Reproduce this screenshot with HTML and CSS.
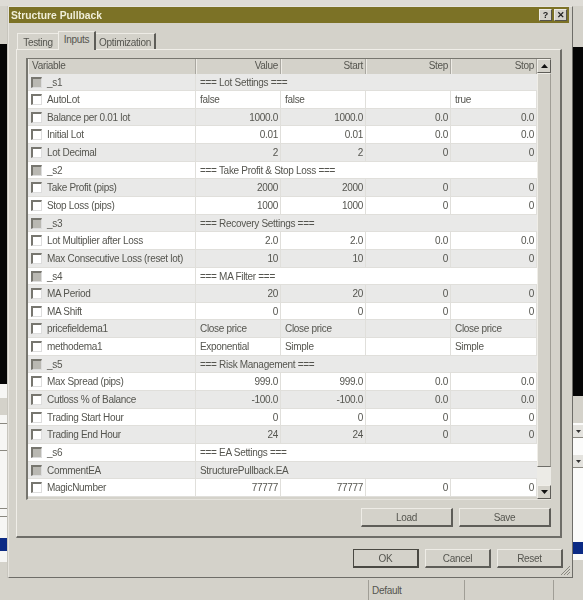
FILE: index.html
```html
<!DOCTYPE html>
<html lang="en">
<head>
    <meta charset="UTF-8">
    <title>Structure Pullback</title>
    <link rel="stylesheet" href="styles.css">
</head>
<body>
    <div class="desktop">
        <div class="top-strip"></div>
        <div class="side left-chart"></div>
        <div class="side left-panel">
            <div class="left-grey"></div>
            <div class="left-line"></div>
            <div class="left-line"></div>
            <div class="left-line left-line-low"></div>
            <div class="left-line left-line-tight"></div>
            <div class="left-blue"></div>
        </div>
        <div class="side right-chart"></div>
        <div class="side right-panel">
            <div class="right-grey"></div>
            <div class="right-drop"><svg width="5" height="3" viewBox="0 0 5 3"><path d="M0 0H5L2.5 3z" fill="#333"/></svg></div>
            <div class="right-drop right-drop-low"><svg width="5" height="3" viewBox="0 0 5 3"><path d="M0 0H5L2.5 3z" fill="#333"/></svg></div>
            <div class="right-blue"></div>
        </div>

        <div class="statusbar">
            <div class="status-cell status-wide"></div>
            <div class="status-cell status-default">Default</div>
            <div class="status-cell status-mid"></div>
            <div class="status-cell"></div>
        </div>

        <div class="dialog">
            <div class="titlebar">
                <span class="title">Structure Pullback</span>
                <span class="title-btn">?</span>
                <span class="title-btn">&#10005;</span>
            </div>

            <div class="tabs">
                <div class="tab tab-testing">Testing</div>
                <div class="tab tab-active">Inputs</div>
                <div class="tab tab-opt">Optimization</div>
            </div>

            <div class="page">
                <div class="grid-frame">
                    <div class="grid">
                        <div class="row head">
                            <div class="cell">Variable</div>
                            <div class="cell num">Value</div>
                            <div class="cell num">Start</div>
                            <div class="cell num">Step</div>
                            <div class="cell num">Stop</div>
                        </div>

                        <div class="row section"><div class="cell var"><i class="check off"></i>_s1</div><div class="cell span">=== Lot Settings ===</div></div>
                        <div class="row"><div class="cell var"><i class="check"></i>AutoLot</div><div class="cell">false</div><div class="cell">false</div><div class="cell"></div><div class="cell">true</div></div>
                        <div class="row"><div class="cell var"><i class="check"></i>Balance per 0.01 lot</div><div class="cell num">1000.0</div><div class="cell num">1000.0</div><div class="cell num">0.0</div><div class="cell num">0.0</div></div>
                        <div class="row"><div class="cell var"><i class="check"></i>Initial Lot</div><div class="cell num">0.01</div><div class="cell num">0.01</div><div class="cell num">0.0</div><div class="cell num">0.0</div></div>
                        <div class="row"><div class="cell var"><i class="check"></i>Lot Decimal</div><div class="cell num">2</div><div class="cell num">2</div><div class="cell num">0</div><div class="cell num">0</div></div>

                        <div class="row section"><div class="cell var"><i class="check off"></i>_s2</div><div class="cell span">=== Take Profit &amp; Stop Loss ===</div></div>
                        <div class="row"><div class="cell var"><i class="check"></i>Take Profit (pips)</div><div class="cell num">2000</div><div class="cell num">2000</div><div class="cell num">0</div><div class="cell num">0</div></div>
                        <div class="row"><div class="cell var"><i class="check"></i>Stop Loss (pips)</div><div class="cell num">1000</div><div class="cell num">1000</div><div class="cell num">0</div><div class="cell num">0</div></div>

                        <div class="row section"><div class="cell var"><i class="check off"></i>_s3</div><div class="cell span">=== Recovery Settings ===</div></div>
                        <div class="row"><div class="cell var"><i class="check"></i>Lot Multiplier after Loss</div><div class="cell num">2.0</div><div class="cell num">2.0</div><div class="cell num">0.0</div><div class="cell num">0.0</div></div>
                        <div class="row"><div class="cell var"><i class="check"></i>Max Consecutive Loss (reset lot)</div><div class="cell num">10</div><div class="cell num">10</div><div class="cell num">0</div><div class="cell num">0</div></div>

                        <div class="row section"><div class="cell var"><i class="check off"></i>_s4</div><div class="cell span">=== MA Filter ===</div></div>
                        <div class="row"><div class="cell var"><i class="check"></i>MA Period</div><div class="cell num">20</div><div class="cell num">20</div><div class="cell num">0</div><div class="cell num">0</div></div>
                        <div class="row"><div class="cell var"><i class="check"></i>MA Shift</div><div class="cell num">0</div><div class="cell num">0</div><div class="cell num">0</div><div class="cell num">0</div></div>
                        <div class="row"><div class="cell var"><i class="check"></i>pricefieldema1</div><div class="cell">Close price</div><div class="cell">Close price</div><div class="cell"></div><div class="cell">Close price</div></div>
                        <div class="row"><div class="cell var"><i class="check"></i>methodema1</div><div class="cell">Exponential</div><div class="cell">Simple</div><div class="cell"></div><div class="cell">Simple</div></div>

                        <div class="row section"><div class="cell var"><i class="check off"></i>_s5</div><div class="cell span">=== Risk Management ===</div></div>
                        <div class="row"><div class="cell var"><i class="check"></i>Max Spread (pips)</div><div class="cell num">999.0</div><div class="cell num">999.0</div><div class="cell num">0.0</div><div class="cell num">0.0</div></div>
                        <div class="row"><div class="cell var"><i class="check"></i>Cutloss % of Balance</div><div class="cell num">-100.0</div><div class="cell num">-100.0</div><div class="cell num">0.0</div><div class="cell num">0.0</div></div>
                        <div class="row"><div class="cell var"><i class="check"></i>Trading Start Hour</div><div class="cell num">0</div><div class="cell num">0</div><div class="cell num">0</div><div class="cell num">0</div></div>
                        <div class="row"><div class="cell var"><i class="check"></i>Trading End Hour</div><div class="cell num">24</div><div class="cell num">24</div><div class="cell num">0</div><div class="cell num">0</div></div>

                        <div class="row section"><div class="cell var"><i class="check off"></i>_s6</div><div class="cell span">=== EA Settings ===</div></div>
                        <div class="row section"><div class="cell var"><i class="check off"></i>CommentEA</div><div class="cell span">StructurePullback.EA</div></div>
                        <div class="row"><div class="cell var"><i class="check"></i>MagicNumber</div><div class="cell num">77777</div><div class="cell num">77777</div><div class="cell num">0</div><div class="cell num">0</div></div>
                    </div>

                    <div class="scrollbar">
                        <div class="scroll-btn"><svg width="7" height="4" viewBox="0 0 7 4"><path d="M3.5 0L7 4H0z" fill="#111"/></svg></div>
                        <div class="scroll-thumb"></div>
                        <div class="scroll-track"></div>
                        <div class="scroll-btn"><svg width="7" height="4" viewBox="0 0 7 4"><path d="M0 0H7L3.5 4z" fill="#111"/></svg></div>
                    </div>
                </div>

                <div class="page-buttons">
                    <button class="btn btn-wide">Load</button>
                    <button class="btn btn-wide">Save</button>
                </div>
            </div>

            <div class="footer">
                <button class="btn btn-default">OK</button>
                <button class="btn">Cancel</button>
                <button class="btn">Reset</button>
            </div>

            <svg class="grip" width="11" height="11" viewBox="0 0 11 11">
                <path d="M10 1L1 10M10 4L4 10M10 7L7 10" stroke="#8a8880" stroke-width="1" fill="none"/>
            </svg>
        </div>
    </div>
</body>
</html>
```

FILE: styles.css
```css
body {
    margin: 0;
    background: #d4d2ca;
    font-family: "Liberation Sans", Arial, sans-serif;
    font-size: 10px;
    letter-spacing: -0.3px;
    color: #55554f;
}
.desktop {
    position: relative;
    width: 583px;
    height: 600px;
    overflow: hidden;
    filter: blur(0.45px);
}

/* windows behind the dialog */
.top-strip {
    position: absolute;
    left: 0;
    top: 0;
    width: 583px;
    height: 6px;
    background: #dedcd6;
}
.side {
    position: absolute;
}
.left-chart {
    left: 0;
    top: 44px;
    width: 7px;
    height: 340px;
    background: #050505;
}
.left-panel {
    left: 0;
    top: 384px;
    width: 7px;
    height: 178px;
    background: #f6f6f4;
}
.left-grey {
    height: 17px;
    margin-top: 14px;
    background: #d4d2ca;
}
.left-line {
    height: 1px;
    margin-top: 8px;
    background: #8a8880;
}
.left-line + .left-line {
    margin-top: 26px;
}
.left-line-low.left-line {
    margin-top: 57px;
}
.left-line-tight.left-line {
    margin-top: 7px;
}
.left-blue {
    height: 13px;
    margin-top: 21px;
    background: #0b2a84;
}
.right-chart {
    left: 573px;
    top: 47px;
    width: 10px;
    height: 349px;
    background: #050505;
}
.right-panel {
    left: 573px;
    top: 396px;
    width: 10px;
    height: 164px;
    background: #fbfbfa;
}
.right-grey {
    height: 27px;
    background: #d4d2ca;
}
.right-drop {
    display: flex;
    align-items: center;
    justify-content: center;
    height: 12px;
    margin-top: 2px;
    background: #e4e3de;
    border-bottom: 1px solid #8a8880;
}
.right-drop-low {
    margin-top: 17px;
}
.right-blue {
    height: 12px;
    margin-top: 74px;
    background: #0b2a84;
}
.statusbar {
    position: absolute;
    left: 0;
    top: 580px;
    width: 583px;
    height: 20px;
    display: flex;
    background: #d4d2ca;
}
.status-cell {
    flex: 1;
    line-height: 21px;
    padding-left: 3px;
}
.status-wide {
    flex: none;
    width: 365px;
    border-right: 1px solid #a09e96;
}
.status-default {
    flex: none;
    width: 92px;
    border-right: 1px solid #a09e96;
}
.status-mid {
    flex: none;
    width: 85px;
    border-right: 1px solid #a09e96;
}

/* dialog */
.dialog {
    position: absolute;
    left: 8px;
    top: 6px;
    width: 565px;
    height: 572px;
    box-sizing: border-box;
    background: #d4d2ca;
    border: 1px solid #e6e4de;
    border-right-color: #6e6d68;
    border-bottom-color: #6e6d68;
    box-shadow: -1px 0 0 #c8c6be;
}
.titlebar {
    display: flex;
    align-items: center;
    gap: 2px;
    height: 16px;
    margin-right: 3px;
    padding: 0 2px 0 2px;
    background: #7c7226;
}
.title {
    flex: 1;
    color: #f0eed8;
    font-weight: bold;
    font-size: 10.3px;
    letter-spacing: 0;
}
.title-btn {
    width: 13px;
    height: 12px;
    background: #d4d2ca;
    border: 1px solid #eeece6;
    border-right-color: #55534c;
    border-bottom-color: #55534c;
    box-sizing: border-box;
    color: #222;
    font-size: 9px;
    font-weight: bold;
    line-height: 10px;
    letter-spacing: 0;
    text-align: center;
}
.tabs {
    display: flex;
    align-items: flex-end;
    height: 18px;
    margin: 8px 0 0 7px;
}
.tab {
    height: 16px;
    line-height: 17px;
    text-align: center;
    box-sizing: border-box;
    border-top: 1px solid #eeece6;
}
.tab-testing {
    width: 41px;
    margin-left: 1px;
    border-left: 1px solid #eeece6;
}
.tab-active {
    width: 38px;
    height: 19px;
    margin-bottom: -1px;
    line-height: 15px;
    position: relative;
    background: #d4d2ca;
    border-left: 1px solid #f0eee8;
    border-right: 2px solid #5e5d58;
}
.tab-opt {
    width: 60px;
    border-right: 2px solid #5e5d58;
}
.page {
    width: 546px;
    height: 489px;
    box-sizing: border-box;
    margin-left: 7px;
    padding: 8px 9px 0 9px;
    border: 1px solid #f0eee8;
    border-right: 2px solid #6e6d68;
    border-bottom: 2px solid #6e6d68;
}
.grid-frame {
    display: flex;
    width: 525px;
    height: 442px;
    box-sizing: border-box;
    border-style: solid;
    border-width: 1px 0 1px 2px;
    border-color: #77766f #e6e4de #e6e4de #77766f;
}
.grid {
    width: 509px;
}
.row {
    display: grid;
    grid-template-columns: 168px 85px 85px 85px 86px;
    height: 17.65px;
    box-sizing: border-box;
    background: #fff;
    border-bottom: 1px solid #e0dfdb;
}
.row:nth-child(even) {
    background: #e9e9e8;
}
.head.row {
    height: 14.5px;
    background: #d4d2ca;
    border-bottom: 0;
}
.head .cell {
    line-height: 13px;
    border-right: 1px solid #a9a7a0;
    box-shadow: inset 1px 0 0 #eeece6;
}
.cell {
    padding: 0 4px;
    line-height: 17px;
    white-space: nowrap;
    border-right: 1px solid #e0dfdb;
    min-width: 0;
}
.num {
    text-align: right;
    padding-right: 2px;
}
.span {
    grid-column: 2 / -1;
    border-right: 0;
}
.var {
    display: flex;
    align-items: center;
    gap: 5px;
    padding-left: 3px;
}
.check {
    flex: none;
    width: 11px;
    height: 11px;
    box-sizing: border-box;
    background: #fff;
    border: 2px solid #77766f;
    border-right: 1px solid #ddd;
    border-bottom: 1px solid #ddd;
}
.off {
    background: #b9b8b2;
}

/* scrollbar */
.scrollbar {
    display: flex;
    flex-direction: column;
    width: 14px;
    background: #ecebe6;
}
.scroll-btn {
    flex: none;
    display: flex;
    align-items: center;
    justify-content: center;
    height: 14px;
    box-sizing: border-box;
    background: #d4d2ca;
    border: 1px solid #f0eee8;
    border-right-color: #5e5d58;
    border-bottom-color: #5e5d58;
}
.scroll-thumb {
    flex: none;
    height: 394px;
    box-sizing: border-box;
    background: #d4d2ca;
    border: 1px solid #f0eee8;
    border-right-color: #a09e96;
    border-bottom-color: #6e6d68;
}
.scroll-track {
    flex: 1;
}

/* buttons */
.page-buttons {
    display: flex;
    justify-content: flex-end;
    gap: 6px;
    margin-top: 8px;
}
.footer {
    display: flex;
    justify-content: flex-end;
    gap: 6px;
    margin: 11px 9px 0 0;
}
.btn {
    width: 66px;
    height: 19px;
    padding: 0;
    box-sizing: border-box;
    background: #d4d2ca;
    border: 1px solid #eeece6;
    border-right: 2px solid #5e5d58;
    border-bottom: 2px solid #5e5d58;
    font-family: inherit;
    font-size: 10px;
    letter-spacing: -0.3px;
    color: #55554f;
}
.btn-wide {
    width: 92px;
}
.btn-default {
    border: 1px solid #4a4943;
    border-right-width: 2px;
    border-bottom-width: 2px;
}
.grip {
    position: absolute;
    right: 1px;
    bottom: 1px;
}
```
